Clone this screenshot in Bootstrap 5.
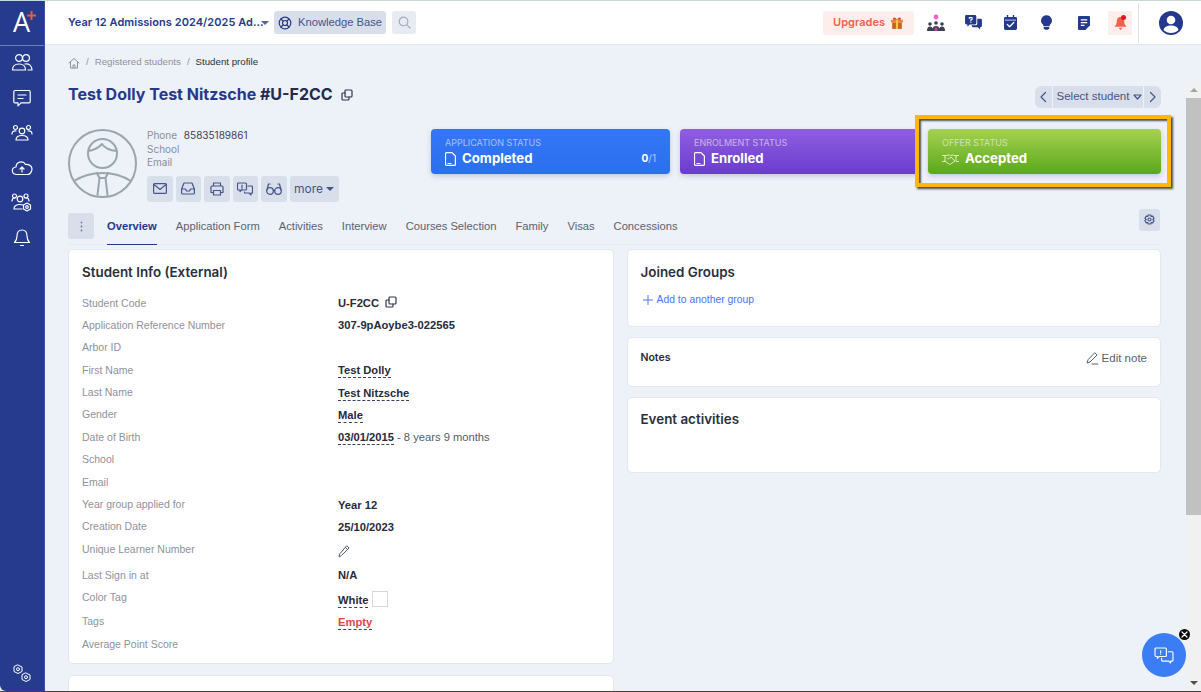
<!DOCTYPE html>
<html lang="en">
<head>
    <meta charset="UTF-8">
    <meta name="viewport" content="width=device-width, initial-scale=1.0">
    <title>Student profile</title>
    <link href="https://cdn.jsdelivr.net/npm/bootstrap@5.3.3/dist/css/bootstrap.min.css" rel="stylesheet">
    <style>
        html, body { height: 100%; overflow: hidden; }
        body {
            background: #edf1f8;
            color: #272b3a;
            font-family: Inter, "Liberation Sans", sans-serif;
            font-size: 11px;
        }
        svg { display: block; fill: none; stroke: currentColor; stroke-width: 1.2; stroke-linecap: round; stroke-linejoin: round; }
        svg.solid-icon { fill: currentColor; stroke: none; }
        svg.thin-line { stroke-width: 1; }
        svg.ink-icon { color: #30364e; }
        .app-shell { height: 692px; border-top: 1px solid #c6d8d8; border-bottom: 1px solid #4d3f30; position: relative; overflow: hidden; }
        .side-bar { width: 45px; flex: 0 0 45px; background: #263a8e; color: #fff; border-bottom-left-radius: 6px; border-right: 1px solid #3d50a0; }
        .side-logo { height: 45px; flex: 0 0 45px; margin-bottom: -1px; border-bottom: 1px solid #6f7fb8; position: relative; font-family: "Open Sans", sans-serif; font-size: 27px; line-height: 1; padding: 7px 0 0 13px; }
        svg.logo-plus { position: absolute; left: 27px; top: 10px; color: #ec5b42; stroke-width: 2; stroke-linecap: butt; }
        .side-link { color: #fff; height: 35px; width: 100%; }
        .main-col { min-width: 0; }
        .top-bar { height: 44px; background: #fff; border-bottom: 1px solid #e1e5ec; padding: 0 18px 0 23px; }
        .year-name { font-size: 11px; font-weight: 600; color: #25398c; width: 193px; white-space: nowrap; letter-spacing: .05px; }
        .caret-down { width: 0; height: 0; border-left: 4px solid transparent; border-right: 4px solid transparent; border-top: 4px solid currentColor; display: inline-block; }
        .caret-muted { color: #5a6480; }
        .soft-btn { background: #d9dfea; border: 0; border-radius: 3px; color: #44548c; font-size: 11.5px; display: inline-flex; align-items: center; justify-content: center; padding: 0; }
        .kb-btn { width: 112px; height: 23px; gap: 6px; margin-left: 5px; font-family: "Liberation Sans", sans-serif; font-size: 11.2px; }
        .kb-btn svg { color: #25398c; }
        .search-btn { width: 24px; height: 23px; margin-left: 6px; color: #a4adc0; background: #e8ebf2; }
        .upgrade-btn { width: 91px; height: 24px; background: #fdeeec; color: #f4604c; font-weight: 600; font-size: 11px; border-radius: 3px; gap: 5px; margin-right: 4px; }
        .top-icon { width: 36.8px; height: 24px; color: #25398c; }
        .crowd-icon { color: #39414f; }
        .bell-box { width: 24px; height: 24px; background: #fdeeec; color: #f4604c; margin-left: 6px; position: relative; }
        .bell-box i { position: absolute; right: 6px; top: 4px; width: 5px; height: 5px; border-radius: 50%; background: #f01020; }
        .top-divider { width: 1px; height: 40px; background: #dfe3ea; margin: 0 20px 0 6px; }
        .page-area { padding: 0 40px 0 23px; }
        .crumbs { height: 35px; gap: 6px; font-size: 9.7px; font-family: "Liberation Sans", sans-serif; color: #8b93a3; }
        .crumbs b { font-weight: 400; color: #2b2f3d; }
        .title-row { height: 29px; }
        .page-title { font-size: 16px; font-weight: 700; color: #25398c; margin: 0; white-space: nowrap; }
        .page-title span { color: #232a4e; }
        .pick-group { margin-top: 6px; align-self: flex-start; }
        .pick-btn { height: 22px; width: 17px; border-radius: 0; }
        .pick-mid { width: 90px; margin: 0 1px; padding-left: 3px; font-size: 11.5px; font-family: "Liberation Sans", sans-serif; gap: 4px; }
        .profile-row { height: 73px; margin-top: 20px; }
        .avatar-ring { width: 69px; height: 69px; flex: 0 0 69px; color: #9aa5ad; }
        svg.avatar-ring { stroke-width: 2; }
        .profile-info { margin-left: 10px; width: 284px; flex: 0 0 284px; font-family: Inter, sans-serif; font-size: 10px; line-height: 13.6px; color: #8a8f9c; }
        .profile-info b { font-weight: 400; color: #3d4250; margin-left: 4px; }
        .action-row { gap: 3px; margin-top: 6px; }
        .action-btn { width: 25.5px; height: 26px; }
        .more-btn { width: 49px; height: 26px; gap: 3px; font-size: 12px; font-family: Inter, sans-serif; }
        .status-box { height: 45px; border-radius: 4px; color: #fff; padding: 7px 14px; box-shadow: 0 2px 5px rgba(60, 80, 130, .25); flex: 0 0 239px; }
        .status-box small { display: block; font-size: 9px; line-height: 13px; text-transform: uppercase; opacity: .55; }
        .status-box div { font-size: 13.2px; font-weight: 700; line-height: 19px; gap: 6px; }
        .st-blue { background: linear-gradient(#3377f5, #2b6ff0); }
        .st-purple { background: linear-gradient(#905fe0, #6a3bd0); margin-left: 10px; flex-basis: 238px; }
        .st-green { background: linear-gradient(#a6d152, #5aa81a); margin-left: 10px; flex: 1 1 0; }
        .st-count { margin-left: auto; font-size: 10px; }
        .st-count em { font-style: normal; font-weight: 400; opacity: .6; }
        .mark-box { position: absolute; left: 915px; top: 114px; width: 256px; height: 72px; border: 4px solid #fdb900; box-shadow: 2px 2px 2px rgba(30, 30, 30, .8), inset 2px 2px 2px rgba(30, 30, 30, .75); pointer-events: none; }
        .tab-row { height: 32px; margin-top: 11px; border-bottom: 1px solid #e6eaf2; }
        .dots-btn { width: 26px; height: 26px; margin-right: 13px; color: #6a7aa0; }
        .tab-links { gap: 19px; height: 32px; font-size: 11.2px; font-family: "Liberation Sans", sans-serif; color: #5c6170; }
        .tab-links a { color: inherit; text-decoration: none; padding-top: 5px; white-space: nowrap; }
        .tab-links a.on { color: #25398c; font-weight: 700; border-bottom: 1px solid #25398c; }
        .gear-btn { width: 21px; height: 22px; margin: -4px 1px 0 auto; }
        .pane-grid { margin-top: 4px; gap: 12.5px; align-items: flex-start; }
        .left-pane { width: 546px; flex: 0 0 546px; }
        .right-pane { flex: 1 1 0; }
        .info-card { background: #fff; border: 1px solid #e2e8ef; border-radius: 5px; padding: 14px 13px 13px; }
        .info-card h2 { font-size: 13.4px; font-weight: 600; color: #2b2f3d; margin: 0; line-height: 16px; }
        .fact-list { margin-top: 15px; font-family: "Liberation Sans", sans-serif; font-size: 10.5px; }
        .fact-row { display: flex; min-height: 22.4px; }
        .fact-row > span { flex: 0 0 256px; color: #8e929c; line-height: 14px; padding-top: .5px; }
        .fact-row > div { font-size: 11.2px; font-weight: 700; color: #272b3a; line-height: 14px; padding-top: 1px; display: flex; align-items: flex-start; gap: 6px; }
        .fact-row a { color: inherit; text-decoration: none; border-bottom: 1px dashed #3a4160; }
        .fact-row a.empty-tag { color: #e0464a; }
        .fact-row em { font-style: normal; font-weight: 400; color: #555a68; margin-left: -3px; }
        .tall-row { min-height: 26px; }
        .tag-row { min-height: 24px; }
        .tag-row > div { padding-top: 3px; }
        svg.pencil-icon { color: #555a68; margin-top: 3px; }
        .white-swatch { width: 16px; height: 16px; border: 1px solid #d5d9df; background: #fff; margin: -2px 0 0 -2px; }
        .bottom-card { height: 60px; margin-top: 11px; }
        .add-link { color: #4a74f0; text-decoration: none; font-family: "Liberation Sans", sans-serif; font-size: 10.4px; margin: 12px 0 0 2px; gap: 4px; }
        .joined-card { height: 78px; }
        .notes-card { height: 50px; margin-top: 10px; }
        .notes-card strong { font-size: 10.5px; font-weight: 600; line-height: 12px; }
        .edit-note { color: #5b6070; font-family: "Liberation Sans", sans-serif; font-size: 11.5px; gap: 3px; margin-top: -2px; }
        .events-card { height: 76px; margin-top: 10px; padding-top: 13px; }
        .left-card { height: 415px; }
        .fake-scroll { position: absolute; right: 0; top: 81px; bottom: 0; width: 15px; background: #f1f1f1; }
        .fake-scroll i { position: absolute; left: 0; right: 0; top: 16px; height: 417px; background: #c1c1c1; }
        .fake-scroll b { position: absolute; left: 4px; width: 0; height: 0; border-left: 4px solid transparent; border-right: 4px solid transparent; }
        .arrow-up { top: 6px; border-bottom: 4px solid #a3a3a3; }
        .arrow-down { bottom: 6px; border-top: 4px solid #505050; }
        .help-fab { position: absolute; left: 1142px; top: 632px; width: 44px; height: 44px; border-radius: 50%; background: #3a7df5; color: #fff; }
        .help-close { position: absolute; left: 1179px; top: 628px; width: 11px; height: 11px; border-radius: 50%; background: #0a0a0a; color: #fff; }
    </style>
</head>
<body>

<div class="app-shell d-flex">
    <aside class="side-bar d-flex flex-column">
        <div class="side-logo">A<svg class="logo-plus" width="9" height="9" viewBox="0 0 9 9"><path d="M4.500 0v9M0 4.500h9"/></svg></div>
        <a class="side-link d-flex align-items-center justify-content-center">
            <svg width="22" height="22" viewBox="0 0 22 22"><circle cx="8" cy="6" r="3.4"/><circle cx="15" cy="6" r="3.4"/><path d="M1.5 18c0-4 2.500-6 6.500-6s6.500 2 6.500 6zM14 12c4-.5 7 1.500 7 6h-4"/></svg>
        </a>
        <a class="side-link d-flex align-items-center justify-content-center">
            <svg width="20" height="20" viewBox="0 0 20 20"><path d="M3 2.500h14a1.200 1.200 0 0 1 1.200 1.200v10a1.200 1.200 0 0 1-1.200 1.200h-8l-3 3v-3H3a1.200 1.200 0 0 1-1.200-1.200v-10A1.200 1.200 0 0 1 3 2.500zM6 7h8M6 10.500h5"/></svg>
        </a>
        <a class="side-link d-flex align-items-center justify-content-center">
            <svg width="22" height="20" viewBox="0 0 22 20"><circle cx="11" cy="8" r="2.800"/><circle cx="4.500" cy="4.500" r="2"/><circle cx="17.500" cy="4.500" r="2"/><path d="M5 17c0-3 2.500-4.500 6-4.500s6 1.500 6 4.500zM1 11c0-2 1.500-3.500 4-3M21 11c0-2-1.500-3.500-4-3"/></svg>
        </a>
        <a class="side-link d-flex align-items-center justify-content-center">
            <svg width="22" height="20" viewBox="0 0 22 20"><path d="M6 16.500c-6 0-6-7-1-7.500 0-5 7-7 9.500-2.500 5-.5 7.500 3 6 6.500-.6 2-2.500 3.500-4.500 3.500zM11 14V9M9 11l2-2 2 2"/></svg>
        </a>
        <a class="side-link d-flex align-items-center justify-content-center">
            <svg width="22" height="22" viewBox="0 0 22 22"><circle cx="9" cy="7" r="2.800"/><circle cx="3.500" cy="4" r="2"/><circle cx="15" cy="4" r="2"/><path d="M3 17c0-3 2.500-4.500 6-4.500 1 0 2 .2 3 .5M3 17h8M1 9c0-2 1-3 3-3M18 9c0-2-1-3-3-3"/><path d="M16 11l3.500 2v4L16 19l-3.500-2v-4z"/><circle cx="16" cy="15" r="1.300"/></svg>
        </a>
        <a class="side-link d-flex align-items-center justify-content-center">
            <svg width="20" height="20" viewBox="0 0 20 20"><path d="M10 2c-3.500 0-5 2.500-5 6 0 3-1 5-2.500 6.500h15C16 13 15 11 15 8c0-3.500-1.500-6-5-6zM8.500 17.500h3"/></svg>
        </a>
        <a class="side-link d-flex align-items-center justify-content-center mt-auto">
            <svg class="thin-line" width="22" height="22" viewBox="0 0 22 22"><path d="M7 2l4 2v4.500l-4 2-4-2V4zM15 10l4 2v4.500l-4 2-4-2V12z"/><circle cx="7" cy="6.200" r="1.500"/><circle cx="15" cy="14.200" r="1.500"/></svg>
        </a>
    </aside>

    <div class="main-col flex-grow-1">
        <header class="top-bar d-flex align-items-center">
            <div class="year-name">Year 12 Admissions 2024/2025 Ad…</div>
            <span class="caret-down caret-muted"></span>
            <button class="soft-btn kb-btn">
                <svg width="14" height="14" viewBox="0 0 14 14"><circle cx="7" cy="7" r="5.800"/><circle cx="7" cy="7" r="2.500"/><path d="M3 3l2.200 2.200M11 3L8.800 5.200M3 11l2.200-2.200M11 11L8.800 8.800"/></svg>
                Knowledge Base
            </button>
            <button class="soft-btn search-btn">
                <svg width="13" height="13" viewBox="0 0 13 13"><circle cx="5.500" cy="5.500" r="4.300"/><path d="M8.700 8.700L12 12"/></svg>
            </button>
            <div class="ms-auto d-flex align-items-center">
                <div class="upgrade-btn d-flex align-items-center justify-content-center">
                    Upgrades
                    <svg class="solid-icon" width="14" height="14" viewBox="0 0 13 13"><path fill="#e8872e" d="M1 3.500h11v2.500H1z"/><path fill="#c9611f" d="M2 6h9v6H2z"/><path fill="#f4c64a" d="M5.500 3.500h2V12h-2z"/><path fill="#e0432e" d="M3 3.500C2 1 5 .5 6.500 3.500 8 .5 11 1 10 3.500z"/></svg>
                </div>
                <div class="top-icon crowd-icon d-flex justify-content-center align-items-center">
                    <svg class="solid-icon" width="20" height="20" viewBox="0 0 20 20"><circle cx="10" cy="4" r="2.400" fill="#ec5fd6"/><circle cx="4" cy="11" r="1.800"/><circle cx="10" cy="10" r="1.800"/><circle cx="16" cy="11" r="1.800"/><path d="M1 18c0-3 1-4.500 3-4.500 1.500 0 2.300.7 2.700 2 .5-1.800 1.500-2.500 3.300-2.500s2.800.7 3.300 2.500c.4-1.300 1.200-2 2.700-2 2 0 3 1.500 3 4.500z"/><path fill="#c23aa8" d="M8.500 14.500h3V18h-3z"/></svg>
                </div>
                <div class="top-icon d-flex justify-content-center align-items-center">
                    <svg class="solid-icon" width="17" height="15" viewBox="0 0 18 16"><path d="M1.500 0h9A1.500 1.500 0 0 1 12 1.500v7A1.500 1.500 0 0 1 10.500 10H5l-2.500 2.500V10h-1A1.500 1.500 0 0 1 0 8.500v-7A1.500 1.500 0 0 1 1.500 0z"/><path d="M13 4h3.500A1.500 1.500 0 0 1 18 5.500v6a1.500 1.500 0 0 1-1.500 1.500H16v2.500L13.500 13H8.500a1.500 1.500 0 0 1-1.500-1.500V11h4.500A1.500 1.500 0 0 0 13 9.500z"/><path fill="#fff" d="M4 2.200h4v3.200H6.800v1H5.600V4.400h1.300V3.400H5.100v.6H4zM5.600 7h1.200v1.300H5.600z"/></svg>
                </div>
                <div class="top-icon d-flex justify-content-center align-items-center">
                    <svg class="solid-icon" width="13" height="15" viewBox="0 0 14 16"><path d="M3 0h1.500v2h5V0H11v2h1.500A1.500 1.500 0 0 1 14 3.500v11a1.500 1.500 0 0 1-1.500 1.500h-11A1.500 1.500 0 0 1 0 14.500v-11A1.500 1.500 0 0 1 1.500 2H3z"/><path d="M3.500 10l2.500 2.500 4.500-4.500" stroke="#fff" stroke-width="1.400" fill="none"/><path fill="#fff" d="M1 5h12v.8H1z"/></svg>
                </div>
                <div class="top-icon d-flex justify-content-center align-items-center">
                    <svg class="solid-icon" width="11" height="15" viewBox="0 0 12 16"><path d="M6 0a6 6 0 0 1 3.500 10.800V12h-7v-1.200A6 6 0 0 1 6 0z"/><path d="M3 13h6v1.200L7.500 16h-3L3 14.200z"/></svg>
                </div>
                <div class="top-icon d-flex justify-content-center align-items-center">
                    <svg class="solid-icon" width="12" height="14" viewBox="0 0 13 15"><path d="M1 0h11a1 1 0 0 1 1 1v9l-5 5H1a1 1 0 0 1-1-1V1a1 1 0 0 1 1-1z"/><path fill="#fff" d="M3 3.500h7v1.200H3zM3 6.500h7v1.200H3zM3 9.500h4v1.200H3z"/></svg>
                </div>
                <div class="bell-box d-flex justify-content-center align-items-center">
                    <svg class="solid-icon" width="13" height="14" viewBox="0 0 14 15"><path d="M7 1c-2.800 0-4 2.200-4 5 0 2.500-1 4-2.500 5.500h13C12 10 11 8.500 11 6c0-2.800-1.200-5-4-5zM5 12.500h4L7 15z"/></svg>
                    <i></i>
                </div>
                <div class="top-divider"></div>
                <svg class="solid-icon" width="24" height="24" viewBox="0 0 24 24"><circle cx="12" cy="12" r="12" fill="#25398c"/><circle cx="12" cy="9" r="4.300" fill="#fff"/><path d="M4.500 19c1-3.500 4-4.500 7.500-4.500s6.500 1 7.500 4.500c-2 2-4.500 3-7.500 3s-5.500-1-7.500-3z" fill="#fff"/></svg>
            </div>
        </header>

        <main class="page-area">
            <nav class="crumbs d-flex align-items-center">
                <svg class="thin-line" width="12" height="12" viewBox="0 0 12 12"><path d="M1 6l5-4.500L11 6M2.500 5v6h7V5M5 11V8h2v3"/></svg>
                <span>/</span><span>Registered students</span><span>/</span><b>Student profile</b>
            </nav>
            <div class="title-row d-flex align-items-center">
                <h1 class="page-title">Test Dolly Test Nitzsche <span>#U-F2CC</span></h1>
                <svg class="ink-icon ms-2" width="12" height="12" viewBox="0 0 12 12"><rect x="4" y="1" width="7" height="7" rx="1"/><path d="M4 4H2a1 1 0 0 0-1 1v5a1 1 0 0 0 1 1h5a1 1 0 0 0 1-1V8"/></svg>
                <div class="pick-group ms-auto d-flex">
                    <button class="soft-btn pick-btn rounded-start"><svg width="9" height="12" viewBox="0 0 9 12"><path d="M6.500 1.500L2 6l4.500 4.500"/></svg></button>
                    <button class="soft-btn pick-btn pick-mid">Select student <svg width="9" height="6" viewBox="0 0 9 6"><path d="M1 1h7L4.500 5z"/></svg></button>
                    <button class="soft-btn pick-btn rounded-end"><svg width="9" height="12" viewBox="0 0 9 12"><path d="M2.500 1.500L7 6l-4.500 4.500"/></svg></button>
                </div>
            </div>

            <section class="profile-row d-flex">
                <svg class="avatar-ring" viewBox="0 0 69 69"><circle cx="34.500" cy="34.500" r="33.500"/><circle cx="34.500" cy="24.500" r="14.500"/><path d="M20.500 22c6-1 10-3 13.500-7 3 4.500 8 6.500 15 7M6 52c8-5 18-8 28.500-8S55 47 63 52M29 44l2.500 5-2 17M40 44l-2.500 5 2 17M31.500 49h6"/></svg>
                <div class="profile-info">
                    <div>Phone <b>85835189861</b></div>
                    <div>School</div>
                    <div>Email</div>
                    <div class="action-row d-flex">
                        <button class="soft-btn action-btn"><svg width="14" height="11" viewBox="0 0 14 11"><rect x=".6" y=".6" width="12.800" height="9.800" rx="1"/><path d="M1 1.500l6 5 6-5"/></svg></button>
                        <button class="soft-btn action-btn"><svg width="14" height="13" viewBox="0 0 14 13"><path d="M3 1h8l2.400 6v4a1 1 0 0 1-1 1H1.600a1 1 0 0 1-1-1V7zM.8 7h3.700l1 2h3l1-2h3.700"/></svg></button>
                        <button class="soft-btn action-btn"><svg width="14" height="14" viewBox="0 0 14 14"><path d="M3.500 4V1h7v3M3.500 10.500H1V5a1 1 0 0 1 1-1h10a1 1 0 0 1 1 1v5.500h-2.500M3.500 8.500h7V13h-7z"/></svg></button>
                        <button class="soft-btn action-btn"><svg width="16" height="14" viewBox="0 0 16 14"><path d="M1.500 1h7a1 1 0 0 1 1 1v5a1 1 0 0 1-1 1H4.500L3 9.500V8H1.500a1 1 0 0 1-1-1V2a1 1 0 0 1 1-1zM11 4h3.500a1 1 0 0 1 1 1v6h-1.500v2L12 11H7.500v-1M5 3.200v2.500M5 6.800v.2"/></svg></button>
                        <button class="soft-btn action-btn"><svg width="16" height="12" viewBox="0 0 16 12"><circle cx="4" cy="8" r="3.300"/><circle cx="12" cy="8" r="3.300"/><path d="M7.300 7.500c.5-.4 1-.4 1.400 0M1 7l1.500-6h1.500M15 7l-1.500-6H12"/></svg></button>
                        <button class="soft-btn more-btn">more <span class="caret-down"></span></button>
                    </div>
                </div>
                <div class="flex-grow-1 d-flex">
                    <div class="status-box st-blue">
                        <small>Application Status</small>
                        <div class="d-flex align-items-center">
                            <svg width="11" height="14" viewBox="0 0 11 14"><path d="M1.500.6h5.500L10.400 4v8.400a1 1 0 0 1-1 1H1.500a1 1 0 0 1-1-1v-10.800a1 1 0 0 1 1-1zM3 11.500h3"/></svg>
                            Completed
                            <span class="st-count">0<em>/1</em></span>
                        </div>
                    </div>
                    <div class="status-box st-purple">
                        <small>Enrolment Status</small>
                        <div class="d-flex align-items-center">
                            <svg width="11" height="14" viewBox="0 0 11 14"><path d="M1.500.6h5.500L10.400 4v8.400a1 1 0 0 1-1 1H1.500a1 1 0 0 1-1-1v-10.800a1 1 0 0 1 1-1zM3 11.500h3"/></svg>
                            Enrolled
                        </div>
                    </div>
                    <div class="status-box st-green">
                        <small>Offer Status</small>
                        <div class="d-flex align-items-center">
                            <svg class="thin-line" width="17" height="12" viewBox="0 0 17 12" opacity=".75"><path d="M.5 2.500h2.500v6H.5M16.500 2.500H14v6h2.500M3 3l3-1c1-.3 2 0 2.500.5L11 2l3 1M3 8l4 3c.8.500 1.500.3 2-.2L13 8 9 4 6.500 6 5.500 5"/></svg>
                            Accepted
                        </div>
                    </div>
                </div>
            </section>

            <div class="tab-row d-flex">
                <button class="soft-btn dots-btn"><svg class="solid-icon" width="3" height="11" viewBox="0 0 3 11"><circle cx="1.500" cy="1.500" r=".9"/><circle cx="1.500" cy="5.500" r=".9"/><circle cx="1.500" cy="9.500" r=".9"/></svg></button>
                <div class="tab-links d-flex">
                    <a class="on">Overview</a>
                    <a>Application Form</a>
                    <a>Activities</a>
                    <a>Interview</a>
                    <a>Courses Selection</a>
                    <a>Family</a>
                    <a>Visas</a>
                    <a>Concessions</a>
                </div>
                <button class="soft-btn gear-btn"><svg width="13" height="13" viewBox="0 0 13 13"><path d="M5.200 1h2.600l.4 1.500 1.500-.4 1.300 2.200-1.100 1.200 1.100 1.200-1.300 2.200-1.500-.4-.4 1.500H5.200l-.4-1.500-1.500.4L2 6.700l1.100-1.200L2 4.300l1.300-2.200 1.500.4z"/><circle cx="6.500" cy="5.500" r="1.500"/></svg></button>
            </div>

            <div class="pane-grid d-flex">
                <div class="left-pane">
                    <div class="info-card left-card">
                        <h2>Student Info (External)</h2>
                        <div class="fact-list">
                            <div class="fact-row"><span>Student Code</span><div>U-F2CC <svg class="ink-icon" width="12" height="12" viewBox="0 0 12 12"><rect x="4" y="1" width="7" height="7" rx="1"/><path d="M4 4H2a1 1 0 0 0-1 1v5a1 1 0 0 0 1 1h5a1 1 0 0 0 1-1V8"/></svg></div></div>
                            <div class="fact-row"><span>Application Reference Number</span><div>307-9pAoybe3-022565</div></div>
                            <div class="fact-row"><span>Arbor ID</span><div></div></div>
                            <div class="fact-row"><span>First Name</span><div><a>Test Dolly</a></div></div>
                            <div class="fact-row"><span>Last Name</span><div><a>Test Nitzsche</a></div></div>
                            <div class="fact-row"><span>Gender</span><div><a>Male</a></div></div>
                            <div class="fact-row"><span>Date of Birth</span><div><a>03/01/2015</a> <em>- 8 years 9 months</em></div></div>
                            <div class="fact-row"><span>School</span><div></div></div>
                            <div class="fact-row"><span>Email</span><div></div></div>
                            <div class="fact-row"><span>Year group applied for</span><div>Year 12</div></div>
                            <div class="fact-row"><span>Creation Date</span><div>25/10/2023</div></div>
                            <div class="fact-row tall-row"><span>Unique Learner Number</span><div><svg class="thin-line pencil-icon" width="12" height="13" viewBox="0 0 12 13"><path d="M9 1l2 2-7.500 7.500L1 12l.5-2.500zM7.500 2.500l2 2"/></svg></div></div>
                            <div class="fact-row"><span>Last Sign in at</span><div>N/A</div></div>
                            <div class="fact-row tag-row"><span>Color Tag</span><div><a>White</a><i class="white-swatch"></i></div></div>
                            <div class="fact-row"><span>Tags</span><div><a class="empty-tag">Empty</a></div></div>
                            <div class="fact-row"><span>Average Point Score</span><div></div></div>
                        </div>
                    </div>
                    <div class="info-card bottom-card"></div>
                </div>
                <div class="right-pane d-flex flex-column">
                    <div class="info-card joined-card">
                        <h2>Joined Groups</h2>
                        <a class="add-link d-flex align-items-center">
                            <svg class="thin-line" width="10" height="10" viewBox="0 0 10 10"><path d="M5 .5v9M.5 5h9"/></svg>
                            Add to another group
                        </a>
                    </div>
                    <div class="info-card notes-card d-flex justify-content-between">
                        <strong>Notes</strong>
                        <span class="edit-note d-flex align-items-center align-self-start">
                            <svg class="thin-line" width="13" height="13" viewBox="0 0 13 13"><path d="M9 1l2 2-7 7-3 1 1-3zM6 12h6"/></svg>
                            Edit note
                        </span>
                    </div>
                    <div class="info-card events-card">
                        <h2>Event activities</h2>
                    </div>
                </div>
            </div>
        </main>
    </div>

    <div class="mark-box"></div>
    <div class="fake-scroll"><b class="arrow-up"></b><i></i><b class="arrow-down"></b></div>
    <button class="help-fab border-0 d-flex align-items-center justify-content-center p-0">
        <svg width="20" height="17" viewBox="0 0 20 18"><path d="M1.500 1h10a1 1 0 0 1 1 1v7a1 1 0 0 1-1 1H5l-2 2v-2H1.500a1 1 0 0 1-1-1V2a1 1 0 0 1 1-1zM14.500 5h4a1 1 0 0 1 1 1v8a1 1 0 0 1-1 1H17v2l-2-2H8.500a1 1 0 0 1-1-1v-2M6.500 4v2M6.500 7.500v.2"/></svg>
    </button>
    <span class="help-close d-flex align-items-center justify-content-center">
        <svg width="7" height="7" viewBox="0 0 7 7"><path d="M1 1l5 5M6 1L1 6"/></svg>
    </span>
</div>

<script src="https://cdn.jsdelivr.net/npm/bootstrap@5.3.3/dist/js/bootstrap.bundle.min.js"></script>
</body>
</html>
